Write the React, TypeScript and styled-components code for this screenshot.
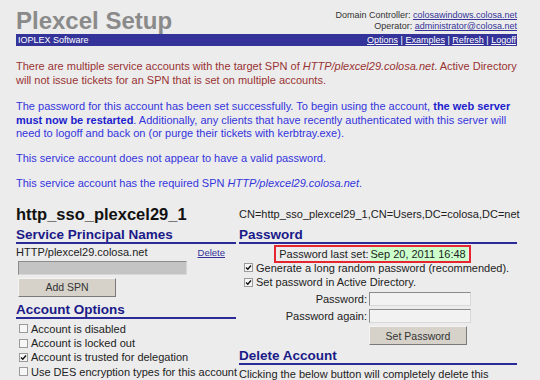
import styled, { createGlobalStyle } from "styled-components";

const GlobalStyle = createGlobalStyle`
  html, body {
    margin: 0;
    padding: 0;
    background: #ececec;
  }
  body {
    font-family: "Liberation Sans", Arial, sans-serif;
    font-size: 11px;
    color: #222;
  }
`;

const Page = styled.div`
  width: 501px;
  padding: 8px 0 0 16px;
`;

const Header = styled.header`
  display: flex;
  justify-content: space-between;
  align-items: flex-end;
`;

const Title = styled.h1`
  margin: 0;
  font-size: 24px;
  line-height: 26px;
  font-weight: bold;
  color: #8a8a8a;
`;

const HeaderInfo = styled.div`
  text-align: right;
  font-size: 9px;
  line-height: 11px;
  color: #333;
  padding-bottom: 2px;
`;

const HeaderLink = styled.a`
  color: #333399;
  text-decoration: underline;
`;

const Bar = styled.div`
  display: flex;
  justify-content: space-between;
  align-items: center;
  height: 12px;
  background: #333399;
  color: #fff;
  font-size: 9px;
  padding: 0 1px 0 2px;
`;

const BarLinks = styled.div`
  font-size: 9px;
  a {
    color: #fff;
    text-decoration: underline;
  }
`;

const Message = styled.p<{ $tone: "error" | "info"; $gap: number }>`
  margin: ${(p) => p.$gap}px 0 0;
  font-size: 11px;
  line-height: 13.5px;
  color: ${(p) => (p.$tone === "error" ? "#993333" : "#3434dc")};
  em {
    font-style: italic;
  }
  b {
    color: #2222cc;
  }
`;

const AccountHeader = styled.div`
  display: grid;
  grid-template-columns: 220px 278px;
  column-gap: 3px;
  align-items: end;
  margin-top: 14px;
`;

const AccountName = styled.h2`
  margin: 0;
  font-size: 16.5px;
  line-height: 18px;
  color: #111;
`;

const DistinguishedName = styled.div`
  text-align: right;
  font-size: 11px;
  line-height: 14px;
  color: #222;
  padding-bottom: 2px;
`;

const Columns = styled.div`
  display: grid;
  grid-template-columns: 220px 278px;
  column-gap: 3px;
  align-items: start;
  margin-top: 4px;
`;

const Column = styled.div`
  display: flex;
  flex-direction: column;
`;

const SectionTitle = styled.h3<{ $gap?: number }>`
  margin: ${(p) => p.$gap ?? 0}px 0 0;
  font-size: 13.5px;
  line-height: 15px;
  font-weight: bold;
  color: #1a1a88;
  border-bottom: 2px solid #2a2a99;
`;

const SpnRow = styled.div`
  display: flex;
  justify-content: space-between;
  align-items: baseline;
  margin-top: 2px;
  padding-right: 11px;
  font-size: 11px;
  line-height: 13px;
`;

const SmallLink = styled.a`
  font-size: 9.5px;
  color: #333399;
  text-decoration: underline;
`;

const TextInput = styled.input<{ $disabled?: boolean; $width: number }>`
  box-sizing: border-box;
  width: ${(p) => p.$width}px;
  height: 14px;
  margin: 0;
  padding: 0;
  border: 1px solid;
  border-color: #8c8c8c #d8d8d8 #d8d8d8 #8c8c8c;
  background: ${(p) => (p.$disabled ? "#c4c4c4" : "#f2f2f2")};
`;

const SpnInput = styled(TextInput)`
  margin: 2px 0 0 2px;
`;

const Button = styled.button<{ $width: number }>`
  box-sizing: border-box;
  width: ${(p) => p.$width}px;
  height: 19px;
  margin: 0;
  padding: 0;
  font-family: "Liberation Sans", Arial, sans-serif;
  font-size: 10.5px;
  color: #333;
  background: #d6d2ca;
  border: 1px solid;
  border-color: #f4f4f4 #7a7a7a #7a7a7a #f4f4f4;
`;

const AddSpnButton = styled(Button)`
  margin: 3px 0 0 2px;
`;

const OptionList = styled.div<{ $indent: number; $gap: number }>`
  display: flex;
  flex-direction: column;
  margin-top: ${(p) => p.$gap}px;
  padding-left: ${(p) => p.$indent}px;
`;

const OptionRow = styled.label`
  display: flex;
  align-items: center;
  gap: 3px;
  height: 14.4px;
  font-size: 11px;
  white-space: nowrap;
  color: #222;
`;

const Box = styled.span`
  box-sizing: border-box;
  flex-shrink: 0;
  display: inline-flex;
  align-items: center;
  justify-content: center;
  width: 9px;
  height: 9px;
  border: 1px solid #9a9a9a;
  background: #f6f6f6;
`;

function Check({ checked, label }: { checked?: boolean; label: string }) {
  return (
    <OptionRow>
      <Box>
        {checked && (
          <svg width="7" height="7" viewBox="0 0 7 7">
            <path d="M1 3.5 L2.8 5.3 L6 1.5" stroke="#111" strokeWidth="1.4" fill="none" />
          </svg>
        )}
      </Box>
      {label}
    </OptionRow>
  );
}

const LastSetBox = styled.div`
  align-self: center;
  display: flex;
  align-items: center;
  margin: 1px 0 0 -11px;
  border: 2px solid #e52530;
  height: 18px;
  box-sizing: border-box;
  padding: 0 1px 0 3px;
  font-size: 11px;
  color: #222;
`;

const Highlight = styled.span`
  background: #ccffcc;
  padding: 0 2px 0 1px;
  margin-left: 1px;
  line-height: 14px;
`;

const FormGrid = styled.div`
  display: grid;
  grid-template-columns: 128px auto;
  justify-content: start;
  column-gap: 2px;
  row-gap: 3px;
  align-items: center;
  margin-top: 3px;
`;

const FieldLabel = styled.span`
  text-align: right;
  font-size: 11px;
  color: #222;
`;

const Note = styled.div`
  margin-top: 3px;
  font-size: 11px;
  line-height: 13px;
  white-space: nowrap;
  color: #222;
`;

export default function App() {
  return (
    <>
      <GlobalStyle />
      <Page>
        <Header>
          <Title>Plexcel Setup</Title>
          <HeaderInfo>
            Domain Controller: <HeaderLink>colosawindows.colosa.net</HeaderLink>
            <br />
            Operator: <HeaderLink>administrator@colosa.net</HeaderLink>
          </HeaderInfo>
        </Header>
        <Bar>
          <span>IOPLEX Software</span>
          <BarLinks>
            <a>Options</a> | <a>Examples</a> | <a>Refresh</a> | <a>Logoff</a>
          </BarLinks>
        </Bar>

        <Message $tone="error" $gap={14}>
          There are multiple service accounts with the target SPN of{" "}
          <em>HTTP/plexcel29.colosa.net</em>. Active Directory will not issue
          tickets for an SPN that is set on multiple accounts.
        </Message>
        <Message $tone="info" $gap={13}>
          The password for this account has been set successfully. To begin
          using the account, <b>the web server must now be restarted</b>.
          Additionally, any clients that have recently authenticated with this
          server will need to logoff and back on (or purge their tickets with
          kerbtray.exe).
        </Message>
        <Message $tone="info" $gap={11}>
          This service account does not appear to have a valid password.
        </Message>
        <Message $tone="info" $gap={12}>
          This service account has the required SPN{" "}
          <em>HTTP/plexcel29.colosa.net</em>.
        </Message>

        <AccountHeader>
          <AccountName>http_sso_plexcel29_1</AccountName>
          <DistinguishedName>
            CN=http_sso_plexcel29_1,CN=Users,DC=colosa,DC=net
          </DistinguishedName>
        </AccountHeader>

        <Columns>
          <Column>
            <SectionTitle>Service Principal Names</SectionTitle>
            <SpnRow>
              <span>HTTP/plexcel29.colosa.net</span>
              <SmallLink>Delete</SmallLink>
            </SpnRow>
            <SpnInput $disabled $width={169} disabled />
            <AddSpnButton $width={98}>Add SPN</AddSpnButton>
            <SectionTitle $gap={5}>Account Options</SectionTitle>
            <OptionList $indent={3} $gap={3}>
              <Check label="Account is disabled" />
              <Check label="Account is locked out" />
              <Check checked label="Account is trusted for delegation" />
              <Check label="Use DES encryption types for this account" />
            </OptionList>
          </Column>

          <Column>
            <SectionTitle>Password</SectionTitle>
            <LastSetBox>
              Password last set:<Highlight>Sep 20, 2011 16:48</Highlight>
            </LastSetBox>
            <OptionList $indent={5} $gap={-2}>
              <Check checked label="Generate a long random password (recommended)." />
              <Check checked label="Set password in Active Directory." />
            </OptionList>
            <FormGrid>
              <FieldLabel>Password:</FieldLabel>
              <TextInput $width={102} type="password" />
              <FieldLabel>Password again:</FieldLabel>
              <TextInput $width={102} type="password" />
              <span />
              <Button $width={98}>Set Password</Button>
            </FormGrid>
            <SectionTitle $gap={3}>Delete Account</SectionTitle>
            <Note>Clicking the below button will completely delete this</Note>
          </Column>
        </Columns>
      </Page>
    </>
  );
}
